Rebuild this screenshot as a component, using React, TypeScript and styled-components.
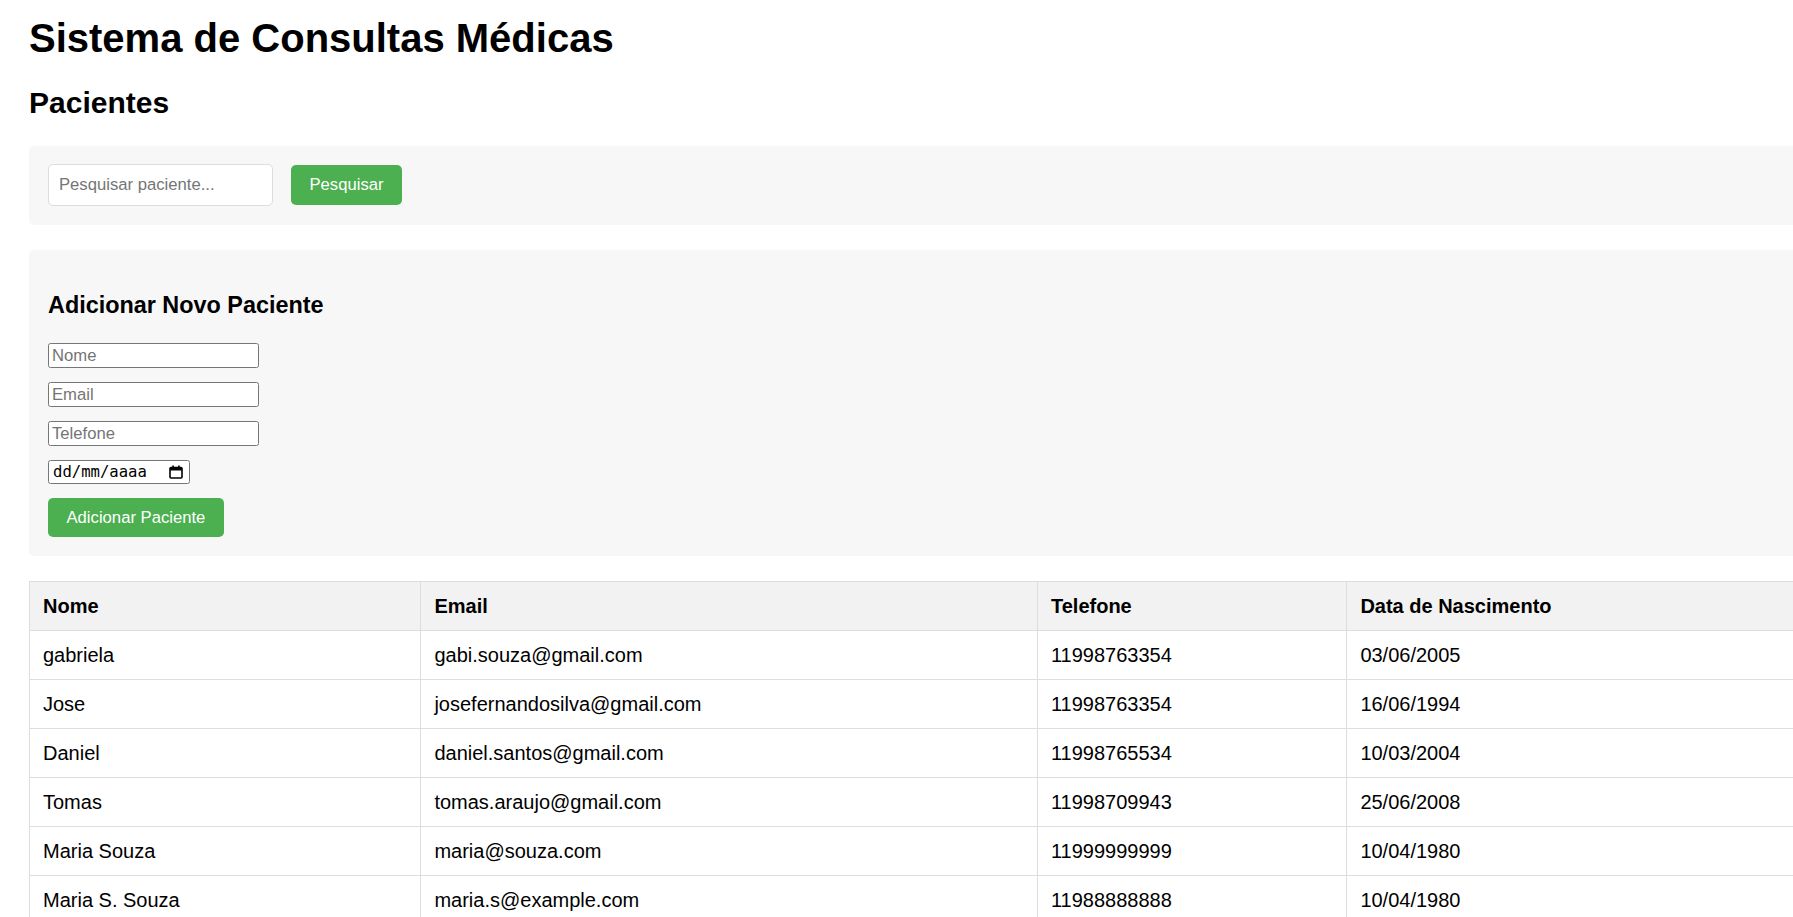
import React from "react";
import styled, { createGlobalStyle } from "styled-components";

const GlobalStyle = createGlobalStyle`
  html, body {
    margin: 0;
    padding: 0;
    overflow: hidden;
    background: #ffffff;
  }
  body {
    font-family: "Liberation Sans", Arial, sans-serif;
    color: #000;
  }
  * { box-sizing: border-box; }
`;

const Page = styled.div`
  width: 1900px;
  padding: 15px 0 0 29px;
`;

const Title = styled.h1`
  font-size: 40px;
  line-height: 46px;
  font-weight: bold;
  margin: 0 0 25px;
`;

const SectionTitle = styled.h2`
  font-size: 30px;
  line-height: 34.5px;
  font-weight: bold;
  margin: 0 0 25px;
`;

const Panel = styled.div<{ $top?: number }>`
  background: #f7f7f7;
  border-radius: 5px;
  margin-top: ${(p) => p.$top ?? 0}px;
`;

const SearchBar = styled(Panel)`
  display: flex;
  align-items: center;
  gap: 18px;
  padding: 18px 19px 19px;
`;

const SearchInput = styled.input`
  width: 225px;
  height: 42px;
  border: 1px solid #dddddd;
  border-radius: 5px;
  padding: 0 10px;
  font-family: "Liberation Sans", Arial, sans-serif;
  font-size: 16.67px;
  background: #fff;
  outline: none;
  &::placeholder { color: #757575; }
`;

const GreenButton = styled.button<{ $h: number }>`
  height: ${(p) => p.$h}px;
  padding: 0 18.5px;
  background: #4caf50;
  color: #fff;
  border: none;
  border-radius: 5px;
  font-family: "Liberation Sans", Arial, sans-serif;
  font-size: 16.67px;
  cursor: pointer;
`;

const FormPanel = styled(Panel)`
  padding: 18.75px 19px 18.2px;
`;

const FormTitle = styled.h3`
  font-size: 23.4px;
  line-height: 27px;
  font-weight: bold;
  margin: 23.4px 0 24.1px;
`;

const Fields = styled.div`
  display: flex;
  flex-direction: column;
  align-items: flex-start;
  gap: 14px;
`;

const TextInput = styled.input`
  width: 211px;
  height: 25px;
  border: 1px solid #767676;
  border-radius: 2.5px;
  padding: 0 3px;
  font-family: "Liberation Sans", Arial, sans-serif;
  font-size: 16.67px;
  background: #fff;
  outline: none;
  &::placeholder { color: #757575; }
`;

const DateField = styled.div`
  width: 142px;
  height: 24px;
  border: 1px solid #767676;
  border-radius: 2.5px;
  background: #fff;
  display: flex;
  align-items: center;
  justify-content: space-between;
  padding: 0 6px 0 4px;
  font-family: "DejaVu Sans Mono", "Liberation Mono", monospace;
  font-size: 15.6px;
  color: #000;
`;

const CalendarIcon = () => (
  <svg width="14" height="14" viewBox="0 0 14 14" aria-hidden="true">
    <rect x="1" y="2.5" width="12" height="10.5" rx="1" fill="none" stroke="#000" strokeWidth="1.6" />
    <rect x="1" y="2.5" width="12" height="3" fill="#000" />
    <rect x="3.3" y="0.5" width="1.6" height="3" fill="#000" />
    <rect x="9.1" y="0.5" width="1.6" height="3" fill="#000" />
  </svg>
);

const Table = styled.table`
  margin-top: 25.8px;
  width: 100%;
  border-collapse: collapse;
  table-layout: fixed;
  font-size: 20px;
  line-height: 23px;
`;

const HeadCell = styled.th`
  background: #f2f2f2;
  border: 1px solid #dddddd;
  padding: 12.5px 12.5px 12.5px 13px;
  text-align: left;
  font-weight: bold;
`;

const Cell = styled.td`
  border: 1px solid #dddddd;
  padding: 12.5px 12.5px 12.5px 13px;
  text-align: left;
  white-space: nowrap;
`;

const patients = [
  ["gabriela", "gabi.souza@gmail.com", "11998763354", "03/06/2005"],
  ["Jose", "josefernandosilva@gmail.com", "11998763354", "16/06/1994"],
  ["Daniel", "daniel.santos@gmail.com", "11998765534", "10/03/2004"],
  ["Tomas", "tomas.araujo@gmail.com", "11998709943", "25/06/2008"],
  ["Maria Souza", "maria@souza.com", "11999999999", "10/04/1980"],
  ["Maria S. Souza", "maria.s@example.com", "11988888888", "10/04/1980"],
];

export default function App() {
  return (
    <>
      <GlobalStyle />
      <Page>
        <Title>Sistema de Consultas Médicas</Title>
        <SectionTitle>Pacientes</SectionTitle>
        <SearchBar>
          <SearchInput placeholder="Pesquisar paciente..." />
          <GreenButton $h={40}>Pesquisar</GreenButton>
        </SearchBar>
        <FormPanel $top={25.3}>
          <FormTitle>Adicionar Novo Paciente</FormTitle>
          <Fields>
            <TextInput placeholder="Nome" />
            <TextInput placeholder="Email" />
            <TextInput placeholder="Telefone" />
            <DateField>
              <span>dd/mm/aaaa</span>
              <CalendarIcon />
            </DateField>
            <GreenButton $h={39.3}>Adicionar Paciente</GreenButton>
          </Fields>
        </FormPanel>
        <Table>
          <colgroup>
            <col style={{ width: 391.4 }} />
            <col style={{ width: 616.6 }} />
            <col style={{ width: 309.4 }} />
            <col />
          </colgroup>
          <thead>
            <tr>
              <HeadCell>Nome</HeadCell>
              <HeadCell>Email</HeadCell>
              <HeadCell>Telefone</HeadCell>
              <HeadCell>Data de Nascimento</HeadCell>
            </tr>
          </thead>
          <tbody>
            {patients.map((p) => (
              <tr key={p[1]}>
                {p.map((v, i) => (
                  <Cell key={i}>{v}</Cell>
                ))}
              </tr>
            ))}
          </tbody>
        </Table>
      </Page>
    </>
  );
}
